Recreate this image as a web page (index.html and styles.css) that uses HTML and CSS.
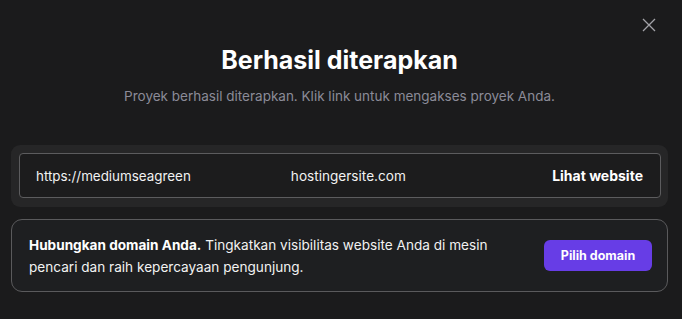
FILE: index.html
```html
<!DOCTYPE html>
<html lang="id">
<head>
<meta charset="utf-8">
<link rel="stylesheet" href="styles.css">
</head>
<body>
<div class="modal">
  <button class="close" aria-label="Tutup">
    <svg width="14" height="14" viewBox="0 0 14 14"><path d="M1 1L13 13M13 1L1 13" stroke="#a3a3a8" stroke-width="1.3" fill="none"/></svg>
  </button>
  <h1 class="title">Berhasil diterapkan</h1>
  <p class="subtitle">Proyek berhasil diterapkan. Klik link untuk mengakses proyek Anda.</p>
  <div class="url-wrap">
    <div class="url-box">
      <span class="url-part">https://mediumseagreen</span>
      <span class="url-part url-domain">hostingersite.com</span>
      <a class="url-link">Lihat website</a>
    </div>
  </div>
  <div class="domain-card">
    <p class="domain-text"><strong>Hubungkan domain Anda.</strong> Tingkatkan visibilitas website Anda di mesin pencari dan raih kepercayaan pengunjung.</p>
    <button class="btn-primary">Pilih domain</button>
  </div>
</div>
</body>
</html>
```
FILE: styles.css
```css
* { box-sizing: border-box; }
html, body { margin: 0; padding: 0; background: #1b1b1c; }
body { font-family: Inter, Roboto, "Liberation Sans", sans-serif; color: #fff; width: 682px; height: 319px; overflow: hidden; }
.modal { position: relative; padding: 44px 14px 0 11px; display: flex; flex-direction: column; }
.close { position: absolute; top: 18px; left: 642px; width: 14px; height: 14px; padding: 0; border: 0; background: none; display: flex; }
.title { margin: 0; font-size: 25px; line-height: 32px; font-weight: 700; text-align: center; color: #fff; }
.subtitle { margin: 10px 0 0; font-size: 13.5px; line-height: 20px; text-align: center; color: #8b8b98; }
.url-wrap { margin-top: 39px; background: #262627; border-radius: 9px; padding: 8px 7px 9px 8px; }
.url-box { display: flex; align-items: center; height: 45px; border: 1px solid #5c5c5e; border-radius: 4px; background: #1c1c1d; padding: 0 17px 0 16px; font-size: 13.4px; }
.url-part { color: #f2f2f2; }
.url-domain { margin-left: 100px; font-size: 13.6px; }
.url-link { margin-left: auto; font-weight: 700; font-size: 14px; color: #fff; }
.domain-card { margin-top: 12px; height: 73px; border: 1px solid #5a5a5c; border-radius: 11px; background: #1e1f21; display: flex; align-items: center; padding: 0 15px 0 17px; }
.domain-text { margin: 0; width: 480px; font-size: 13.6px; line-height: 22px; color: #f2f2f2; }
.domain-text strong { font-weight: 700; color: #fff; }
.btn-primary { margin-left: auto; width: 108px; height: 31px; border: 0; border-radius: 6px; background: #673de6; color: #fff; font-family: inherit; font-size: 12.5px; font-weight: 700; padding: 0; }
```
